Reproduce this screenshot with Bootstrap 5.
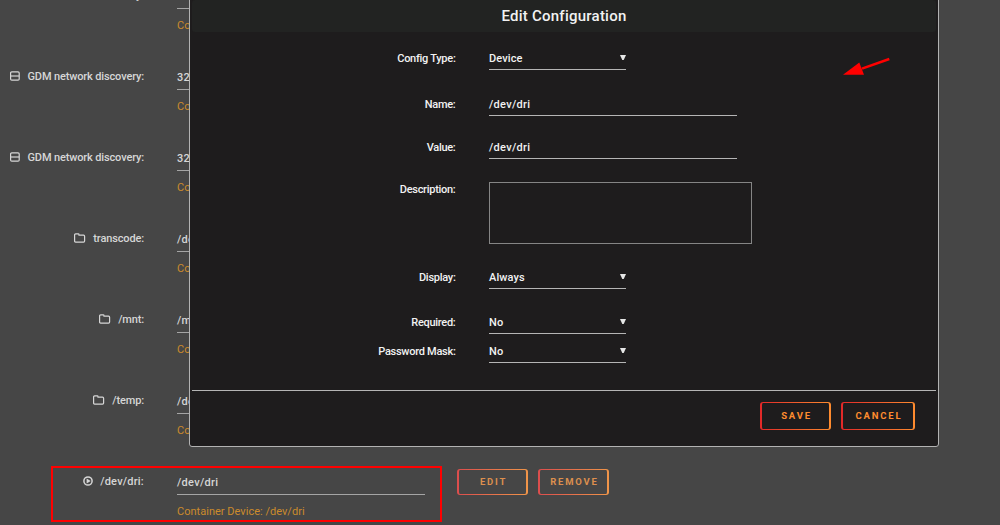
<!DOCTYPE html>
<html lang="en">
<head>
<meta charset="utf-8">
<meta name="viewport" content="width=device-width, initial-scale=1">
<title>Edit Configuration</title>
<link href="https://cdn.jsdelivr.net/npm/bootstrap@5.3.0/dist/css/bootstrap.min.css" rel="stylesheet">
<style>
body{background:#464646;color:#d6d6d6;font:500 11px/22px Roboto,"Liberation Sans",sans-serif;height:525px}
.page{height:525px}
.settings{margin-top:-16px}
.setting{height:81px}
.setting-label{width:144px;height:24px;gap:7px;letter-spacing:-.14px;white-space:nowrap}
.setting-label svg{flex:none;margin-top:-2px}
.short-name{letter-spacing:.22px}
.setting-field{width:248px;margin-left:33px;white-space:nowrap}
.setting-value{height:25px;line-height:26px;border-bottom:1px solid #a5a5a5;letter-spacing:.3px}
.setting-help{color:#cb8b2c;font-weight:400;line-height:20px;padding-top:7px;letter-spacing:.02px}
.glow-btn{border:1.5px solid transparent;border-width:1.5px 2px;border-radius:3px;font:700 9.5px/1 Roboto,sans-serif;letter-spacing:1.8px;padding:0 0 0 2px;color:#ff8c2f;height:28px;background:linear-gradient(#1e1c1d,#1e1c1d) padding-box,linear-gradient(90deg,#e22828,#ff8c2f) border-box}
.glow-btn.dimmed{color:#dc8f4e;height:26px;background:linear-gradient(#464646,#464646) padding-box,linear-gradient(90deg,#dc4d4d,#f09549) border-box}
.w-edit{width:71px}.w-cancel{width:74px}
.row-actions{margin:-1px 0 0 32px;gap:10px}
.dialog-box{left:189px;top:-4px;width:750px;height:451px;background:#1e1c1d;border:1px solid #b3b3b3;border-radius:3px;padding:3px 2px 0;color:#f2f2f2}
.dialog-title{height:32px;background:#222322;border-radius:3px;font-size:15px;font-weight:500;line-height:32px;letter-spacing:.24px}
.form-area{height:358px;padding-top:14px}
.field-row{height:24px;line-height:26px;letter-spacing:.1px}
.field-row.tall{height:62px}
.field-label{width:264px;margin-right:33px;white-space:nowrap;letter-spacing:-.28px;padding-right:.5px}
.tall .field-label{line-height:16px}
.line-input{height:24px;border-bottom:1px solid #b5b5b5}
.w-select{width:137px}.w-text{width:248px;letter-spacing:.3px}
.caret{width:6px;height:5px;margin:9px 0 0;background:#e6e6e6;clip-path:polygon(0 0,100% 0,62% 100%,38% 100%)}
.desc-box{width:263px;height:62px;border:1px solid #858585}
.dialog-foot{border-top:1px solid #b5b5b5;padding:11px 21px 0 0;gap:10px}
.mark-box{left:51px;top:466px;width:391px;height:56px;border:2px solid #f00}
.mark-arrow{left:840px;top:54px}
</style>
</head>
<body class="overflow-hidden">
<svg class="d-none">
 <symbol id="port" viewBox="0 0 10 10"><rect x=".6" y=".9" width="8.6" height="8.2" rx="1.2" fill="none" stroke="currentColor" stroke-width="1.2"/><path d="M.6 5h8.6" stroke="currentColor" stroke-width="1.2"/></symbol>
 <symbol id="folder" viewBox="0 0 12 10"><path d="M1.6.9h2.6q.8 0 .8.8v.5h4.6q1 0 1 1v4.9q0 1-1 1H1.6q-1 0-1-1V1.9q0-1 1-1z" fill="none" stroke="currentColor" stroke-width="1.2"/></symbol>
 <symbol id="play" viewBox="0 0 10 10"><circle cx="5" cy="5" r="4.1" fill="none" stroke="currentColor" stroke-width="1.5"/><path d="M3.6 2.6v4.8L7.7 5z" fill="currentColor"/></symbol>
</svg>
<main class="page position-relative overflow-hidden">
 <div class="settings">
  <div class="setting d-flex"><div class="setting-label d-flex align-items-center justify-content-end"><svg width="10" height="10"><use href="#port"/></svg><span>GDM network discovery:</span></div><div class="setting-field"><div class="setting-value">32410</div><div class="setting-help">Container Port: 32410</div></div></div>
  <div class="setting d-flex"><div class="setting-label d-flex align-items-center justify-content-end"><svg width="10" height="10"><use href="#port"/></svg><span>GDM network discovery:</span></div><div class="setting-field"><div class="setting-value">32412</div><div class="setting-help">Container Port: 32412</div></div></div>
  <div class="setting d-flex"><div class="setting-label d-flex align-items-center justify-content-end"><svg width="10" height="10"><use href="#port"/></svg><span>GDM network discovery:</span></div><div class="setting-field"><div class="setting-value">32413</div><div class="setting-help">Container Port: 32413</div></div></div>
  <div class="setting d-flex"><div class="setting-label d-flex align-items-center justify-content-end"><svg width="12" height="10"><use href="#folder"/></svg><span>transcode:</span></div><div class="setting-field"><div class="setting-value">/dev/shm</div><div class="setting-help">Container Path: /transcode</div></div></div>
  <div class="setting d-flex"><div class="setting-label d-flex align-items-center justify-content-end"><svg width="12" height="10"><use href="#folder"/></svg><span>/mnt:</span></div><div class="setting-field"><div class="setting-value">/mnt</div><div class="setting-help">Container Path: /mnt</div></div></div>
  <div class="setting d-flex"><div class="setting-label d-flex align-items-center justify-content-end"><svg width="12" height="10"><use href="#folder"/></svg><span>/temp:</span></div><div class="setting-field"><div class="setting-value">/dev/shm</div><div class="setting-help">Container Path: /temp</div></div></div>
  <div class="setting d-flex"><div class="setting-label d-flex align-items-center justify-content-end"><svg width="10" height="10"><use href="#play"/></svg><span class="short-name">/dev/dri:</span></div><div class="setting-field"><div class="setting-value">/dev/dri</div><div class="setting-help">Container Device: /dev/dri</div></div>
   <div class="row-actions d-flex"><button class="glow-btn dimmed w-edit">EDIT</button><button class="glow-btn dimmed w-edit">REMOVE</button></div>
  </div>
 </div>

 <section class="dialog-box position-absolute" role="dialog" aria-label="Edit Configuration">
  <h1 class="dialog-title text-center m-0">Edit Configuration</h1>
  <div class="form-area">
   <div class="field-row d-flex"><div class="field-label text-end">Config Type:</div><div class="line-input w-select d-flex justify-content-between">Device<i class="caret"></i></div></div>
   <div class="field-row d-flex" style="margin-top:22px"><div class="field-label text-end">Name:</div><div class="line-input w-text">/dev/dri</div></div>
   <div class="field-row d-flex" style="margin-top:19px"><div class="field-label text-end">Value:</div><div class="line-input w-text">/dev/dri</div></div>
   <div class="field-row tall d-flex" style="margin-top:23px"><div class="field-label text-end">Description:</div><div class="desc-box"></div></div>
   <div class="field-row d-flex" style="margin-top:21px"><div class="field-label text-end">Display:</div><div class="line-input w-select d-flex justify-content-between">Always<i class="caret"></i></div></div>
   <div class="field-row d-flex" style="margin-top:21px"><div class="field-label text-end">Required:</div><div class="line-input w-select d-flex justify-content-between">No<i class="caret"></i></div></div>
   <div class="field-row d-flex" style="margin-top:5px"><div class="field-label text-end">Password Mask:</div><div class="line-input w-select d-flex justify-content-between">No<i class="caret"></i></div></div>
  </div>
  <div class="dialog-foot d-flex justify-content-end"><button class="glow-btn w-edit">SAVE</button><button class="glow-btn w-cancel">CANCEL</button></div>
 </section>

 <div class="mark-box position-absolute"></div>
 <svg class="mark-arrow position-absolute" width="54" height="26"><path d="M49.3 5 22 14.6" stroke="#f00" stroke-width="2.5"/><path d="M3 20.8 19.3 8.5 24 20.8z" fill="#f00"/></svg>
</main>
<script src="https://cdn.jsdelivr.net/npm/bootstrap@5.3.0/dist/js/bootstrap.bundle.min.js"></script>
</body>
</html>
